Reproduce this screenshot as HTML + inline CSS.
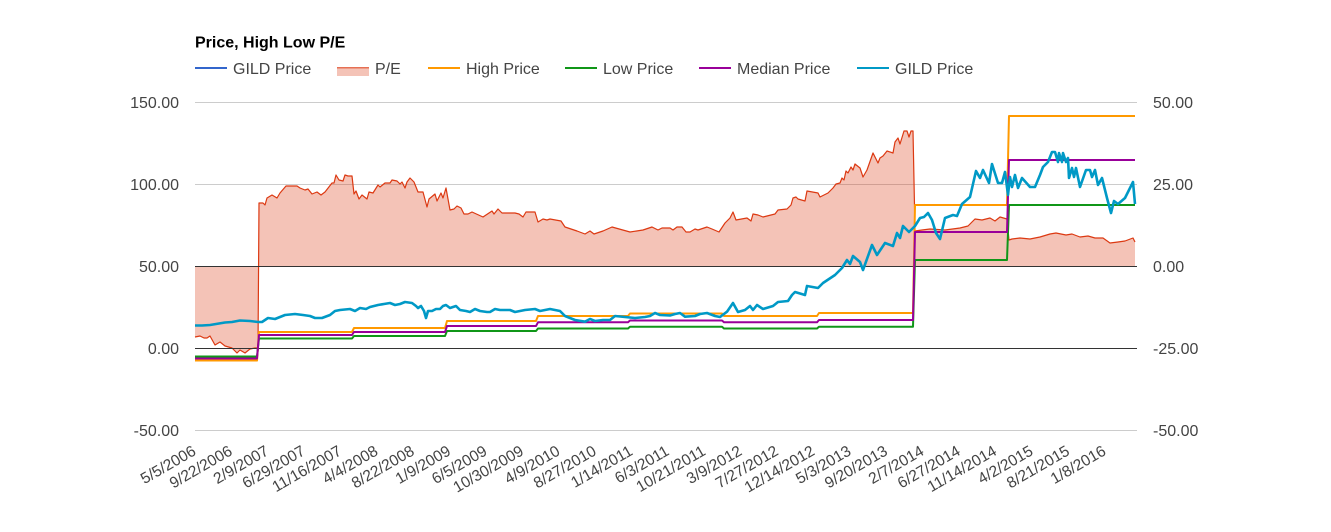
<!DOCTYPE html>
<html><head><meta charset="utf-8"><style>
html,body{margin:0;padding:0;background:#fff}
svg{display:block}
text{font-family:"Liberation Sans",Arial,sans-serif;font-size:16px;fill:#444}
.x text{font-size:15.6px}
</style></head><body>
<svg width="1331" height="532" viewBox="0 0 1331 532" xmlns="http://www.w3.org/2000/svg">
<rect width="1331" height="532" fill="#fff"/>
<text x="195" y="47.5" style="font-weight:bold;fill:#000">Price, High Low P/E</text>
<rect x="195" y="67" width="32" height="2" fill="#3366cc"/><text x="233" y="74">GILD Price</text>
<rect x="337" y="67" width="32" height="9" fill="#dc3912" fill-opacity=".3"/><rect x="337" y="67" width="32" height="1.5" fill="#dc3912" fill-opacity=".6"/><text x="375" y="74">P/E</text>
<rect x="428" y="67" width="32" height="2" fill="#ff9900"/><text x="466" y="74">High Price</text>
<rect x="565" y="67" width="32" height="2" fill="#109618"/><text x="603" y="74">Low Price</text>
<rect x="699" y="67" width="32" height="2" fill="#990099"/><text x="737" y="74">Median Price</text>
<rect x="857" y="67" width="32" height="2" fill="#0099c6"/><text x="895" y="74">GILD Price</text>

<g fill="#cccccc"><rect x="195" y="102" width="942" height="1"/><rect x="195" y="184" width="942" height="1"/><rect x="195" y="430" width="942" height="1"/></g>

<path fill="#dc3912" fill-opacity=".3" d="M195,266L195,337L200,336L204,338L207,338L210,336L215,345L220,342L225,346L232,348L237,353L240,350L245,353L250,349L255,348L258,348L259,266L259,203L263,203L265,205L267,198L272,195L277,198L280,193L286,186L297,186L300,188L305,190L308,189L312,194L317,192L321,195L325,192L332,183L334,183L336,175L339,180L343,181L345,175L348,176L352,176L354,194L356,191L359,199L362,195L367,199L369,192L373,193L378,185L380,187L385,183L390,183L392,180L397,181L400,184L402,182L405,188L407,182L410,178L414,182L418,192L423,192L427,207L429,199L435,194L437,201L441,193L443,198L446,188L450,210L454,209L457,206L461,208L464,214L468,214L472,212L483,217L492,211L494,214L498,209L502,213L515,213L519,214L523,217L526,212L535,212L538,222L543,219L547,220L550,219L561,221L565,227L577,231L585,234L590,231L594,234L603,231L612,227L630,232L643,230L652,227L658,230L662,228L670,228L673,230L677,227L682,227L686,232L690,232L695,229L698,230L707,227L712,229L719,232L725,223L730,218L733,212L736,220L747,218L751,221L753,214L758,215L763,217L775,214L778,210L787,209L791,205L793,198L796,197L798,199L805,201L807,191L818,193L820,197L828,193L833,188L836,184L840,183L842,178L844,180L846,171L848,173L851,167L853,170L855,164L860,168L863,177L867,170L873,153L878,163L880,158L883,156L887,151L893,153L895,142L898,138L900,144L904,131L907,131L909,137L911,131L913,131L915,231L922,230L930,229L945,230L960,228L968,226L975,219L982,220L990,218L995,221L1000,217L1007,219L1009,240L1012,239L1020,238L1030,239L1040,237L1050,234L1056,233L1066,235L1072,234L1080,237L1088,236L1095,238L1103,238L1110,243L1118,242L1125,241L1133,238L1135,242L1135,266Z"/>
<polyline fill="none" stroke="#dc3912" stroke-width="1.2" stroke-linejoin="round" points="195,337 200,336 204,338 207,338 210,336 215,345 220,342 225,346 232,348 237,353 240,350 245,353 250,349 255,348 258,348 259,203 263,203 265,205 267,198 272,195 277,198 280,193 286,186 297,186 300,188 305,190 308,189 312,194 317,192 321,195 325,192 332,183 334,183 336,175 339,180 343,181 345,175 348,176 352,176 354,194 356,191 359,199 362,195 367,199 369,192 373,193 378,185 380,187 385,183 390,183 392,180 397,181 400,184 402,182 405,188 407,182 410,178 414,182 418,192 423,192 427,207 429,199 435,194 437,201 441,193 443,198 446,188 450,210 454,209 457,206 461,208 464,214 468,214 472,212 483,217 492,211 494,214 498,209 502,213 515,213 519,214 523,217 526,212 535,212 538,222 543,219 547,220 550,219 561,221 565,227 577,231 585,234 590,231 594,234 603,231 612,227 630,232 643,230 652,227 658,230 662,228 670,228 673,230 677,227 682,227 686,232 690,232 695,229 698,230 707,227 712,229 719,232 725,223 730,218 733,212 736,220 747,218 751,221 753,214 758,215 763,217 775,214 778,210 787,209 791,205 793,198 796,197 798,199 805,201 807,191 818,193 820,197 828,193 833,188 836,184 840,183 842,178 844,180 846,171 848,173 851,167 853,170 855,164 860,168 863,177 867,170 873,153 878,163 880,158 883,156 887,151 893,153 895,142 898,138 900,144 904,131 907,131 909,137 911,131 913,131 915,231 922,230 930,229 945,230 960,228 968,226 975,219 982,220 990,218 995,221 1000,217 1007,219 1009,240 1012,239 1020,238 1030,239 1040,237 1050,234 1056,233 1066,235 1072,234 1080,237 1088,236 1095,238 1103,238 1110,243 1118,242 1125,241 1133,238 1135,242"/>

<rect x="195" y="266" width="942" height="1" fill="#333"/>
<rect x="195" y="348" width="942" height="1" fill="#333"/>

<g fill="none" stroke-width="2" stroke-linejoin="round">
<polyline stroke="#ff9900" points="195,360.5 257,360.5 259,332 352,332 354,328 445,328 447,321 536,321 538,316 628,316 630,313.5 722,313.5 724,316 817,316 819,313 913,313 915,205 1007,205 1009,116 1135,116"/>
<polyline stroke="#109618" points="195,356.5 257,356.5 259,338.5 352,338.5 354,336 445,336 447,331 536,331 538,328.5 628,328.5 630,326.7 722,326.7 724,328.5 817,328.5 819,326.7 913,326.7 915,260 1007,260 1009,205 1135,205"/>
<polyline stroke="#990099" points="195,358.5 257,358.5 259,335 352,335 354,332 445,332 447,326 536,326 538,322.3 628,322.3 630,320.5 722,320.5 724,322.3 817,322.3 819,320 913,320 915,232 1007,232 1009,160 1135,160"/>
<polyline stroke="#0099c6" stroke-width="2.6" points="195,325.5 202,325.5 210,325 216,324 225,322.5 232,322 240,320.5 250,321 258,322 262,322 268,318 275,319 285,315 295,314 303,315 310,316 315,318 322,318 330,315 335,311 340,310 350,309 355,311 360,308 366,309 370,307 378,305 384,304 390,303 395,305 400,304 405,302 412,303 416,306 418,308 421,306 424,311 426,318 428,311 432,311 436,309 440,309 443,306 446,305 450,308 456,306 460,310 466,311 470,312 475,309 480,311 487,312 490,312 495,309 500,310 510,310 515,312 520,311 525,310 535,309 540,311 545,310 550,309 555,310 560,311 565,316 575,320 585,321.7 590,319 595,321 603,320 610,320 615,316 625,317 635,318 645,317 650,316 655,313 660,315 670,315.5 675,314 680,313 685,316.7 695,316 700,314 707,313 715,316 720,317 727,311.7 733,303 738,312 745,310 750,306 753,310 757,305 763,309 773,306 778,302 788,301 792,295 795,292 805,295 807,286 818,288 823,283 835,275 842,268 847,260 850,264 853,256 860,262 863,270 872,245 877,255 885,243 893,246 897,233 900,238 903,226 909,232 915,226 920,218 924,217 928,213 932,220 936,233 940,239 945,218 953,215 957,216 962,204 970,197 976,171 980,178 983,170 989,183 992,164 998,183 1002,183 1005,172 1008,195 1010,177 1012,187 1015,175 1018,188 1022,178 1030,187 1035,187 1040,175 1043,167 1048,162 1052,152 1055,152 1058,162 1059,153 1062,162 1063,153 1066,162 1068,158 1069,178 1072,168 1074,177 1076,168 1080,187 1086,170 1090,170 1092,177 1095,170 1098,185 1102,178 1107,198 1111,213 1114,201 1118,204 1125,198 1133,182 1135,204"/>
</g>

<g text-anchor="end">
<text x="179" y="108">150.00</text><text x="179" y="190">100.00</text><text x="179" y="272">50.00</text><text x="179" y="354">0.00</text><text x="179" y="436">-50.00</text>
</g>
<text x="1153" y="108">50.00</text><text x="1153" y="190">25.00</text><text x="1153" y="272">0.00</text><text x="1153" y="354">-25.00</text><text x="1153" y="436">-50.00</text>

<g class="x" text-anchor="end">
<text transform="translate(197,454) rotate(-30)">5/5/2006</text>
<text transform="translate(233.4,454) rotate(-30)">9/22/2006</text>
<text transform="translate(269.8,454) rotate(-30)">2/9/2007</text>
<text transform="translate(306.2,454) rotate(-30)">6/29/2007</text>
<text transform="translate(342.6,454) rotate(-30)">11/16/2007</text>
<text transform="translate(379,454) rotate(-30)">4/4/2008</text>
<text transform="translate(415.4,454) rotate(-30)">8/22/2008</text>
<text transform="translate(451.8,454) rotate(-30)">1/9/2009</text>
<text transform="translate(488.2,454) rotate(-30)">6/5/2009</text>
<text transform="translate(524.6,454) rotate(-30)">10/30/2009</text>
<text transform="translate(561,454) rotate(-30)">4/9/2010</text>
<text transform="translate(597.4,454) rotate(-30)">8/27/2010</text>
<text transform="translate(633.8,454) rotate(-30)">1/14/2011</text>
<text transform="translate(670.2,454) rotate(-30)">6/3/2011</text>
<text transform="translate(706.6,454) rotate(-30)">10/21/2011</text>
<text transform="translate(743,454) rotate(-30)">3/9/2012</text>
<text transform="translate(779.4,454) rotate(-30)">7/27/2012</text>
<text transform="translate(815.8,454) rotate(-30)">12/14/2012</text>
<text transform="translate(852.2,454) rotate(-30)">5/3/2013</text>
<text transform="translate(888.6,454) rotate(-30)">9/20/2013</text>
<text transform="translate(925,454) rotate(-30)">2/7/2014</text>
<text transform="translate(961.4,454) rotate(-30)">6/27/2014</text>
<text transform="translate(997.8,454) rotate(-30)">11/14/2014</text>
<text transform="translate(1034.2,454) rotate(-30)">4/2/2015</text>
<text transform="translate(1070.6,454) rotate(-30)">8/21/2015</text>
<text transform="translate(1107,454) rotate(-30)">1/8/2016</text>
</g>
</svg>
</body></html>
